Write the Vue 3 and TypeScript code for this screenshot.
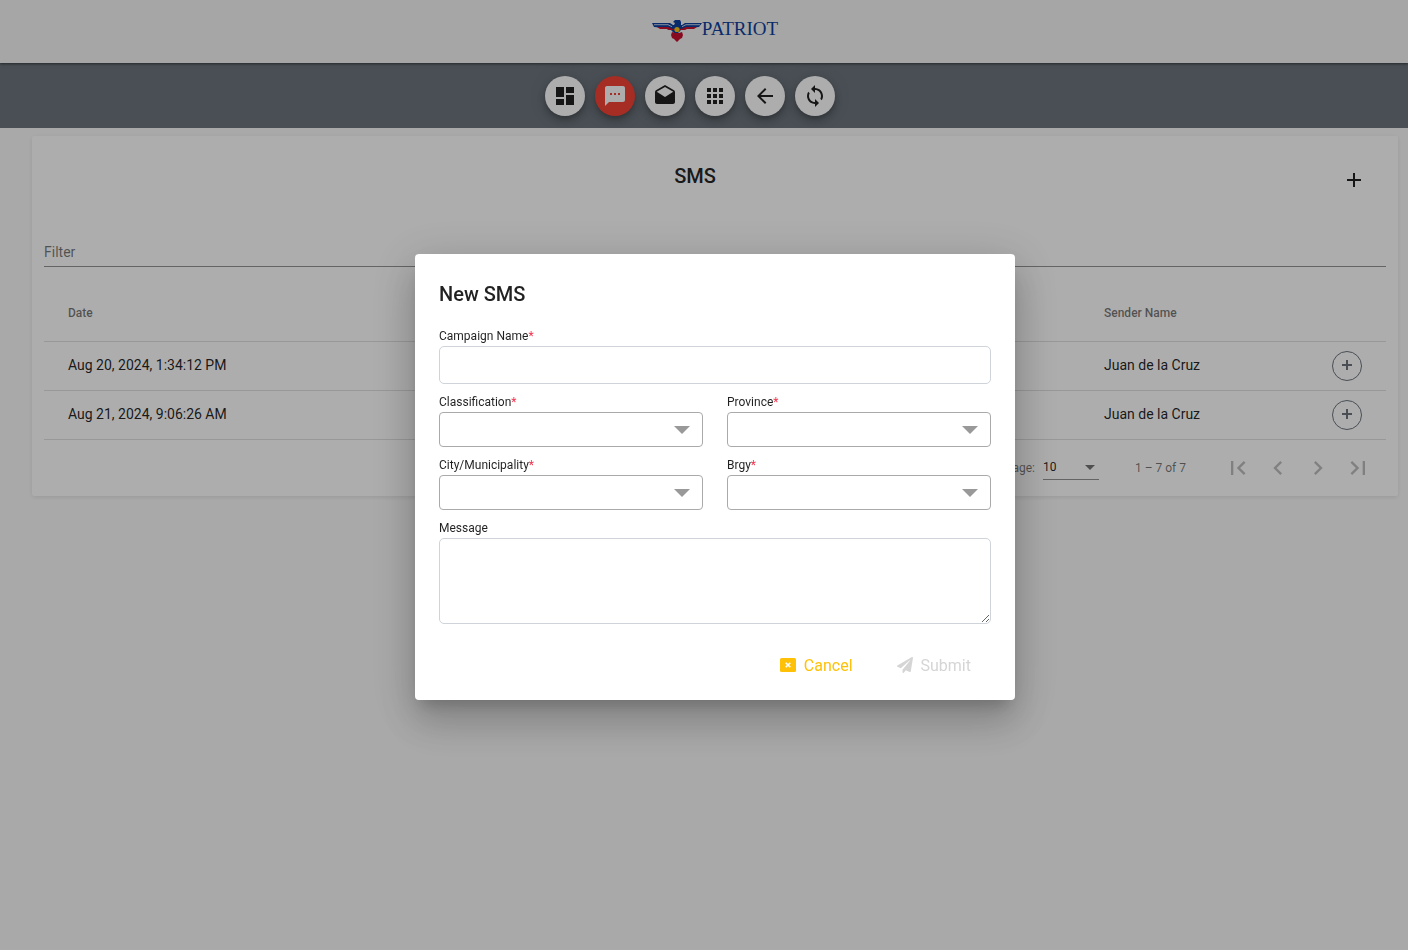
<script setup lang="ts">
interface NavItem {
  label: string
  path: string
  active?: boolean
}

interface Message {
  date: string
  sender: string
}

const navItems: NavItem[] = [
  { label: 'Dashboard', path: 'M3 13h8V3H3v10zm0 8h8v-6H3v6zm10 0h8V11h-8v10zm0-18v6h8V3h-8z' },
  {
    label: 'SMS',
    active: true,
    path: 'M20 2H4c-1.1 0-1.99.9-1.99 2L2 22l4-4h14c1.1 0 2-.9 2-2V4c0-1.1-.9-2-2-2zM9 11H7V9h2v2zm4 0h-2V9h2v2zm4 0h-2V9h2v2z',
  },
  {
    label: 'Email',
    path: 'M21.99 8c0-.72-.37-1.35-.94-1.7L12 1 2.95 6.3C2.38 6.65 2 7.28 2 8v10c0 1.1.9 2 2 2h16c1.1 0 2-.9 2-2l-.01-10zM12 13L3.74 7.84 12 3l8.26 4.84L12 13z',
  },
  {
    label: 'Apps',
    path: 'M4 8h4V4H4v4zm6 12h4v-4h-4v4zm-6 0h4v-4H4v4zm0-6h4v-4H4v4zm6 0h4v-4h-4v4zm6-10v4h4V4h-4zm-6 4h4V4h-4v4zm6 6h4v-4h-4v4zm0 6h4v-4h-4v4z',
  },
  { label: 'Back', path: 'M20 11H7.83l5.59-5.59L12 4l-8 8 8 8 1.41-1.41L7.83 13H20v-2z' },
  {
    label: 'Refresh',
    path: 'M12 4V1L8 5l4 4V6c3.31 0 6 2.69 6 6 0 1.01-.25 1.97-.7 2.8l1.46 1.46C19.54 15.03 20 13.57 20 12c0-4.42-3.58-8-8-8zm0 14c-3.31 0-6-2.69-6-6 0-1.01.25-1.97.7-2.8L5.24 7.74C4.46 8.97 4 10.43 4 12c0 4.42 3.58 8 8 8v3l4-4-4-4v3z',
  },
]

const messages: Message[] = [
  { date: 'Aug 20, 2024, 1:34:12 PM', sender: 'Juan de la Cruz' },
  { date: 'Aug 21, 2024, 9:06:26 AM', sender: 'Juan de la Cruz' },
]

const pagers = [
  { label: 'First page', path: 'M18.41 16.59L13.82 12l4.59-4.59L17 6l-6 6 6 6zM6 6h2v12H6z' },
  { label: 'Previous page', path: 'M15.41 7.41L14 6l-6 6 6 6 1.41-1.41L10.83 12z' },
  { label: 'Next page', path: 'M10 6L8.59 7.41 13.17 12l-4.58 4.59L10 18l6-6z' },
  { label: 'Last page', path: 'M5.59 7.41L10.18 12l-4.59 4.59L7 18l6-6-6-6zM16 6h2v12h-2z' },
]

const selects = [
  { id: 'classification', label: 'Classification' },
  { id: 'province', label: 'Province' },
  { id: 'city', label: 'City/Municipality' },
  { id: 'brgy', label: 'Brgy' },
]
</script>

<template>
  <div class="app">
    <header class="brand-bar">
      <div class="brand">
        <svg class="eagle" viewBox="0 0 50 24" aria-hidden="true">
          <path fill="#0e3f9e" d="M0 5h18l3 2h1l1-2-2-1 2-2h5l1 2v3h1l3-2h17l-3 4-12 1-4 2h-2l-3 3h-4l-3-3h-2l-4-2-11-1z" />
          <path fill="none" stroke="#f5f5f5" stroke-width=".8" d="M2 6.700h14l4 2M48 6.700H34l-4 2" />
          <path fill="#c8102e" d="M5 9h11l5 2h2v1h-6l-2-1H8zM45 9H34l-5 2h-2v1h6l2-1h7z" />
          <path fill="#c8102e" d="M20 14l3 1h4l3-1 1 3-1 3-2 1-3 3-3-3-2-1-1-3z" />
          <circle cx="25" cy="11.500" r="2.600" fill="#f5c518" />
        </svg>
        <span class="brand-name">PATRIOT</span>
      </div>
    </header>

    <nav class="nav-bar">
      <button
        v-for="item in navItems"
        :key="item.label"
        type="button"
        class="fab"
        :class="{ active: item.active }"
        :aria-label="item.label"
      >
        <svg viewBox="0 0 24 24"><path :d="item.path" /></svg>
      </button>
    </nav>

    <main class="card">
      <div class="card-head">
        <h1>SMS</h1>
        <button type="button" class="icon-btn add" aria-label="Add SMS">
          <svg viewBox="0 0 24 24"><path d="M19 13h-6v6h-2v-6H5v-2h6V5h2v6h6v2z" /></svg>
        </button>
      </div>
      <input class="filter" type="text" placeholder="Filter" aria-label="Filter" />
      <table>
        <colgroup>
          <col />
          <col class="col-sender" />
          <col class="col-action" />
        </colgroup>
        <thead>
          <tr>
            <th>Date</th>
            <th>Sender Name</th>
            <th></th>
          </tr>
        </thead>
        <tbody>
          <tr v-for="m in messages" :key="m.date">
            <td>{{ m.date }}</td>
            <td>{{ m.sender }}</td>
            <td class="action">
              <button type="button" class="expand" aria-label="Details">
                <svg viewBox="0 0 12 12"><path d="M1 5h4V1h2v4h4v2H7v4H5V7H1z" /></svg>
              </button>
            </td>
          </tr>
        </tbody>
      </table>
      <div class="paginator">
        <label for="page-size">Items per page:</label>
        <div class="page-size">
          <select id="page-size"><option>10</option></select>
          <svg viewBox="0 0 10 5"><path d="M0 0h10L5 5z" /></svg>
        </div>
        <span class="range">1 – 7 of 7</span>
        <button v-for="p in pagers" :key="p.label" type="button" class="icon-btn" disabled :aria-label="p.label">
          <svg viewBox="0 0 24 24"><path :d="p.path" /></svg>
        </button>
      </div>
    </main>

    <div class="overlay">
      <form class="dialog" role="dialog" aria-labelledby="dialog-title" @submit.prevent>
        <h2 id="dialog-title">New SMS</h2>
        <div class="fields">
          <div class="field wide">
            <label for="campaign">Campaign Name<span class="req">*</span></label>
            <input id="campaign" type="text" />
          </div>
          <div v-for="s in selects" :key="s.id" class="field">
            <label :for="s.id">{{ s.label }}<span class="req">*</span></label>
            <div class="select-box">
              <select :id="s.id"><option></option></select>
              <svg viewBox="0 0 16 8"><path d="M0 0h16L8 8z" /></svg>
            </div>
          </div>
          <div class="field wide">
            <label for="message">Message</label>
            <textarea id="message"></textarea>
          </div>
        </div>
        <div class="actions">
          <button type="button" class="cancel">
            <svg viewBox="0 0 16 16">
              <rect y="1" width="16" height="14" rx="1.500" />
              <path d="M5.700 5.700l4.600 4.600M10.300 5.700l-4.600 4.600" stroke="#fff" stroke-width="1.600" />
            </svg>
            Cancel
          </button>
          <button type="submit" class="submit" disabled>
            <svg viewBox="0 0 512 512">
              <path d="M476 3.200L12.500 270.600c-18.100 10.400-15.800 35.600 2.200 43.200L121 358.400l287.300-253.200c5.500-4.900 13.300 2.600 8.600 8.300L176 407v80.500c0 23.600 28.500 32.900 42.500 15.800L282 426l124.600 52.200c14.200 6 30.400-2.900 33-18.200l72-432C515 7.800 493.300-6.800 476 3.200z" />
            </svg>
            Submit
          </button>
        </div>
      </form>
    </div>
  </div>
</template>

<style>
body {
  margin: 0;
  background: #fafafa;
  overflow-x: hidden;
}
</style>

<style scoped>
.app {
  min-height: 100vh;
  font-family: Roboto, "Liberation Sans", sans-serif;
  font-size: 14px;
  color: rgba(0, 0, 0, 0.87);
}
* {
  box-sizing: border-box;
}
button,
input,
select,
textarea {
  font: inherit;
  color: inherit;
  border: 0;
  margin: 0;
  padding: 0;
  background: none;
  outline: 0;
}
select {
  appearance: none;
}
svg {
  display: block;
  fill: currentColor;
  flex: none;
}
.brand-bar {
  position: relative;
  height: 63px;
  padding: 0 0 4px 22px;
  display: flex;
  align-items: center;
  justify-content: center;
  background: #f5f5f5;
  box-shadow: 0 1px 2px rgba(0, 0, 0, 0.4), 0 2px 4px rgba(0, 0, 0, 0.1);
}
.brand {
  display: flex;
  align-items: center;
}
.eagle {
  width: 50px;
  height: 24px;
}
.brand-name {
  padding-bottom: 2px;
  font-family: "Liberation Serif", serif;
  font-size: 19px;
  line-height: 22px;
  color: #0e3f9e;
}
.nav-bar {
  height: 65px;
  padding: 13px 28px 0 0;
  display: flex;
  justify-content: center;
  gap: 10px;
  background: #6c757d;
}
.fab {
  width: 40px;
  height: 40px;
  border-radius: 50%;
  display: grid;
  place-items: center;
  background: #fff;
  box-shadow: 0 3px 5px -1px rgba(0, 0, 0, 0.2), 0 6px 10px rgba(0, 0, 0, 0.14), 0 1px 18px rgba(0, 0, 0, 0.12);
}
.fab svg {
  width: 24px;
  height: 24px;
}
.fab.active {
  background: #f44336;
  color: #fff;
}
.card {
  margin: 8px 10px 0 32px;
  padding: 12px 12px 0;
  background: #fff;
  border-radius: 2px;
  box-shadow: 0 2px 4px rgba(0, 0, 0, 0.06), 0 0 6px rgba(0, 0, 0, 0.04);
}
.card-head {
  display: flex;
  align-items: flex-start;
  padding: 12px 12px 0;
}
h1,
h2 {
  margin: 0;
  font-size: 20px;
  line-height: 32px;
  font-weight: 500;
}
h1 {
  flex: 1;
  text-align: center;
}
.icon-btn {
  width: 40px;
  height: 40px;
  display: grid;
  place-items: center;
}
.icon-btn svg {
  width: 24px;
  height: 24px;
}
.paginator .icon-btn {
  color: rgba(0, 0, 0, 0.26);
}
.paginator .icon-btn svg {
  width: 28px;
  height: 28px;
}
.filter {
  display: block;
  width: 100%;
  height: 29px;
  margin: 38px 0 18px;
  border-bottom: 1px solid rgba(0, 0, 0, 0.42);
}
.filter::placeholder {
  color: rgba(0, 0, 0, 0.54);
  opacity: 1;
}
table {
  width: 100%;
  table-layout: fixed;
  border-collapse: separate;
  border-spacing: 0;
}
.col-sender {
  width: 228px;
}
.col-action {
  width: 54px;
}
th,
td {
  padding: 0;
  text-align: left;
  border-bottom: 1px solid rgba(0, 0, 0, 0.12);
}
th:first-child,
td:first-child {
  padding-left: 24px;
}
th {
  height: 57px;
  font-size: 12px;
  font-weight: 500;
  color: rgba(0, 0, 0, 0.54);
}
td {
  height: 49px;
  padding-bottom: 2px;
}
td.action {
  padding-bottom: 0;
}
.expand {
  width: 30px;
  height: 30px;
  padding-bottom: 2px;
  border: 1px solid #6c757d;
  border-radius: 50%;
  display: grid;
  place-items: center;
  color: #6c757d;
}
.expand svg {
  width: 12px;
  height: 12px;
}
.paginator {
  height: 56px;
  padding-right: 8px;
  display: flex;
  align-items: center;
  justify-content: flex-end;
  font-size: 12px;
  color: rgba(0, 0, 0, 0.54);
}
.page-size {
  width: 56px;
  height: 26px;
  margin: 0 36px 2px 8px;
  display: grid;
  align-items: center;
  border-bottom: 1px solid rgba(0, 0, 0, 0.42);
}
.page-size select,
.page-size svg {
  grid-area: 1 / 1;
}
.page-size select {
  width: 100%;
  height: 25px;
  color: rgba(0, 0, 0, 0.87);
}
.page-size svg {
  width: 10px;
  height: 5px;
  margin: 2px 4px 0 0;
  justify-self: end;
  pointer-events: none;
}
.range {
  margin-right: 32px;
}
.overlay {
  position: fixed;
  inset: 0;
  display: flex;
  align-items: center;
  justify-content: center;
  padding: 4px 0 0 22px;
  background: rgba(0, 0, 0, 0.32);
}
.dialog {
  width: 600px;
  padding: 24px 24px 18px;
  border-radius: 4px;
  background: #fff;
  box-shadow: 0 11px 15px -7px rgba(0, 0, 0, 0.2), 0 24px 38px 3px rgba(0, 0, 0, 0.14), 0 9px 46px 8px rgba(0, 0, 0, 0.12);
}
.fields {
  margin-top: 16px;
  display: grid;
  grid-template-columns: 1fr 1fr;
  gap: 8px 24px;
}
.wide {
  grid-column: 1 / -1;
}
.field label {
  display: block;
  font-size: 12px;
  line-height: 20px;
}
.req {
  color: #f0324b;
}
.field input,
.field textarea {
  display: block;
  width: 100%;
  padding: 6px 12px;
  border: 1px solid #ced4da;
  border-radius: 5px;
}
.field input {
  height: 38px;
}
.field textarea {
  height: 86px;
  resize: vertical;
}
.select-box {
  display: grid;
  align-items: center;
}
.select-box select,
.select-box svg {
  grid-area: 1 / 1;
}
.select-box select {
  width: 100%;
  height: 35px;
  padding: 0 12px;
  border: 1px solid #aaa;
  border-radius: 4px;
}
.select-box svg {
  width: 16px;
  height: 8px;
  margin-right: 13px;
  justify-self: end;
  color: #999;
  pointer-events: none;
}
.actions {
  margin-top: 24px;
  display: flex;
  justify-content: flex-end;
  gap: 4px;
  font-size: 16px;
}
.actions button {
  height: 34px;
  padding: 0 20px;
  display: flex;
  align-items: center;
  gap: 8px;
}
.actions svg {
  width: 16px;
  height: 16px;
}
.cancel {
  color: #ffc107;
}
.submit {
  color: #d5d5d5;
}
</style>
